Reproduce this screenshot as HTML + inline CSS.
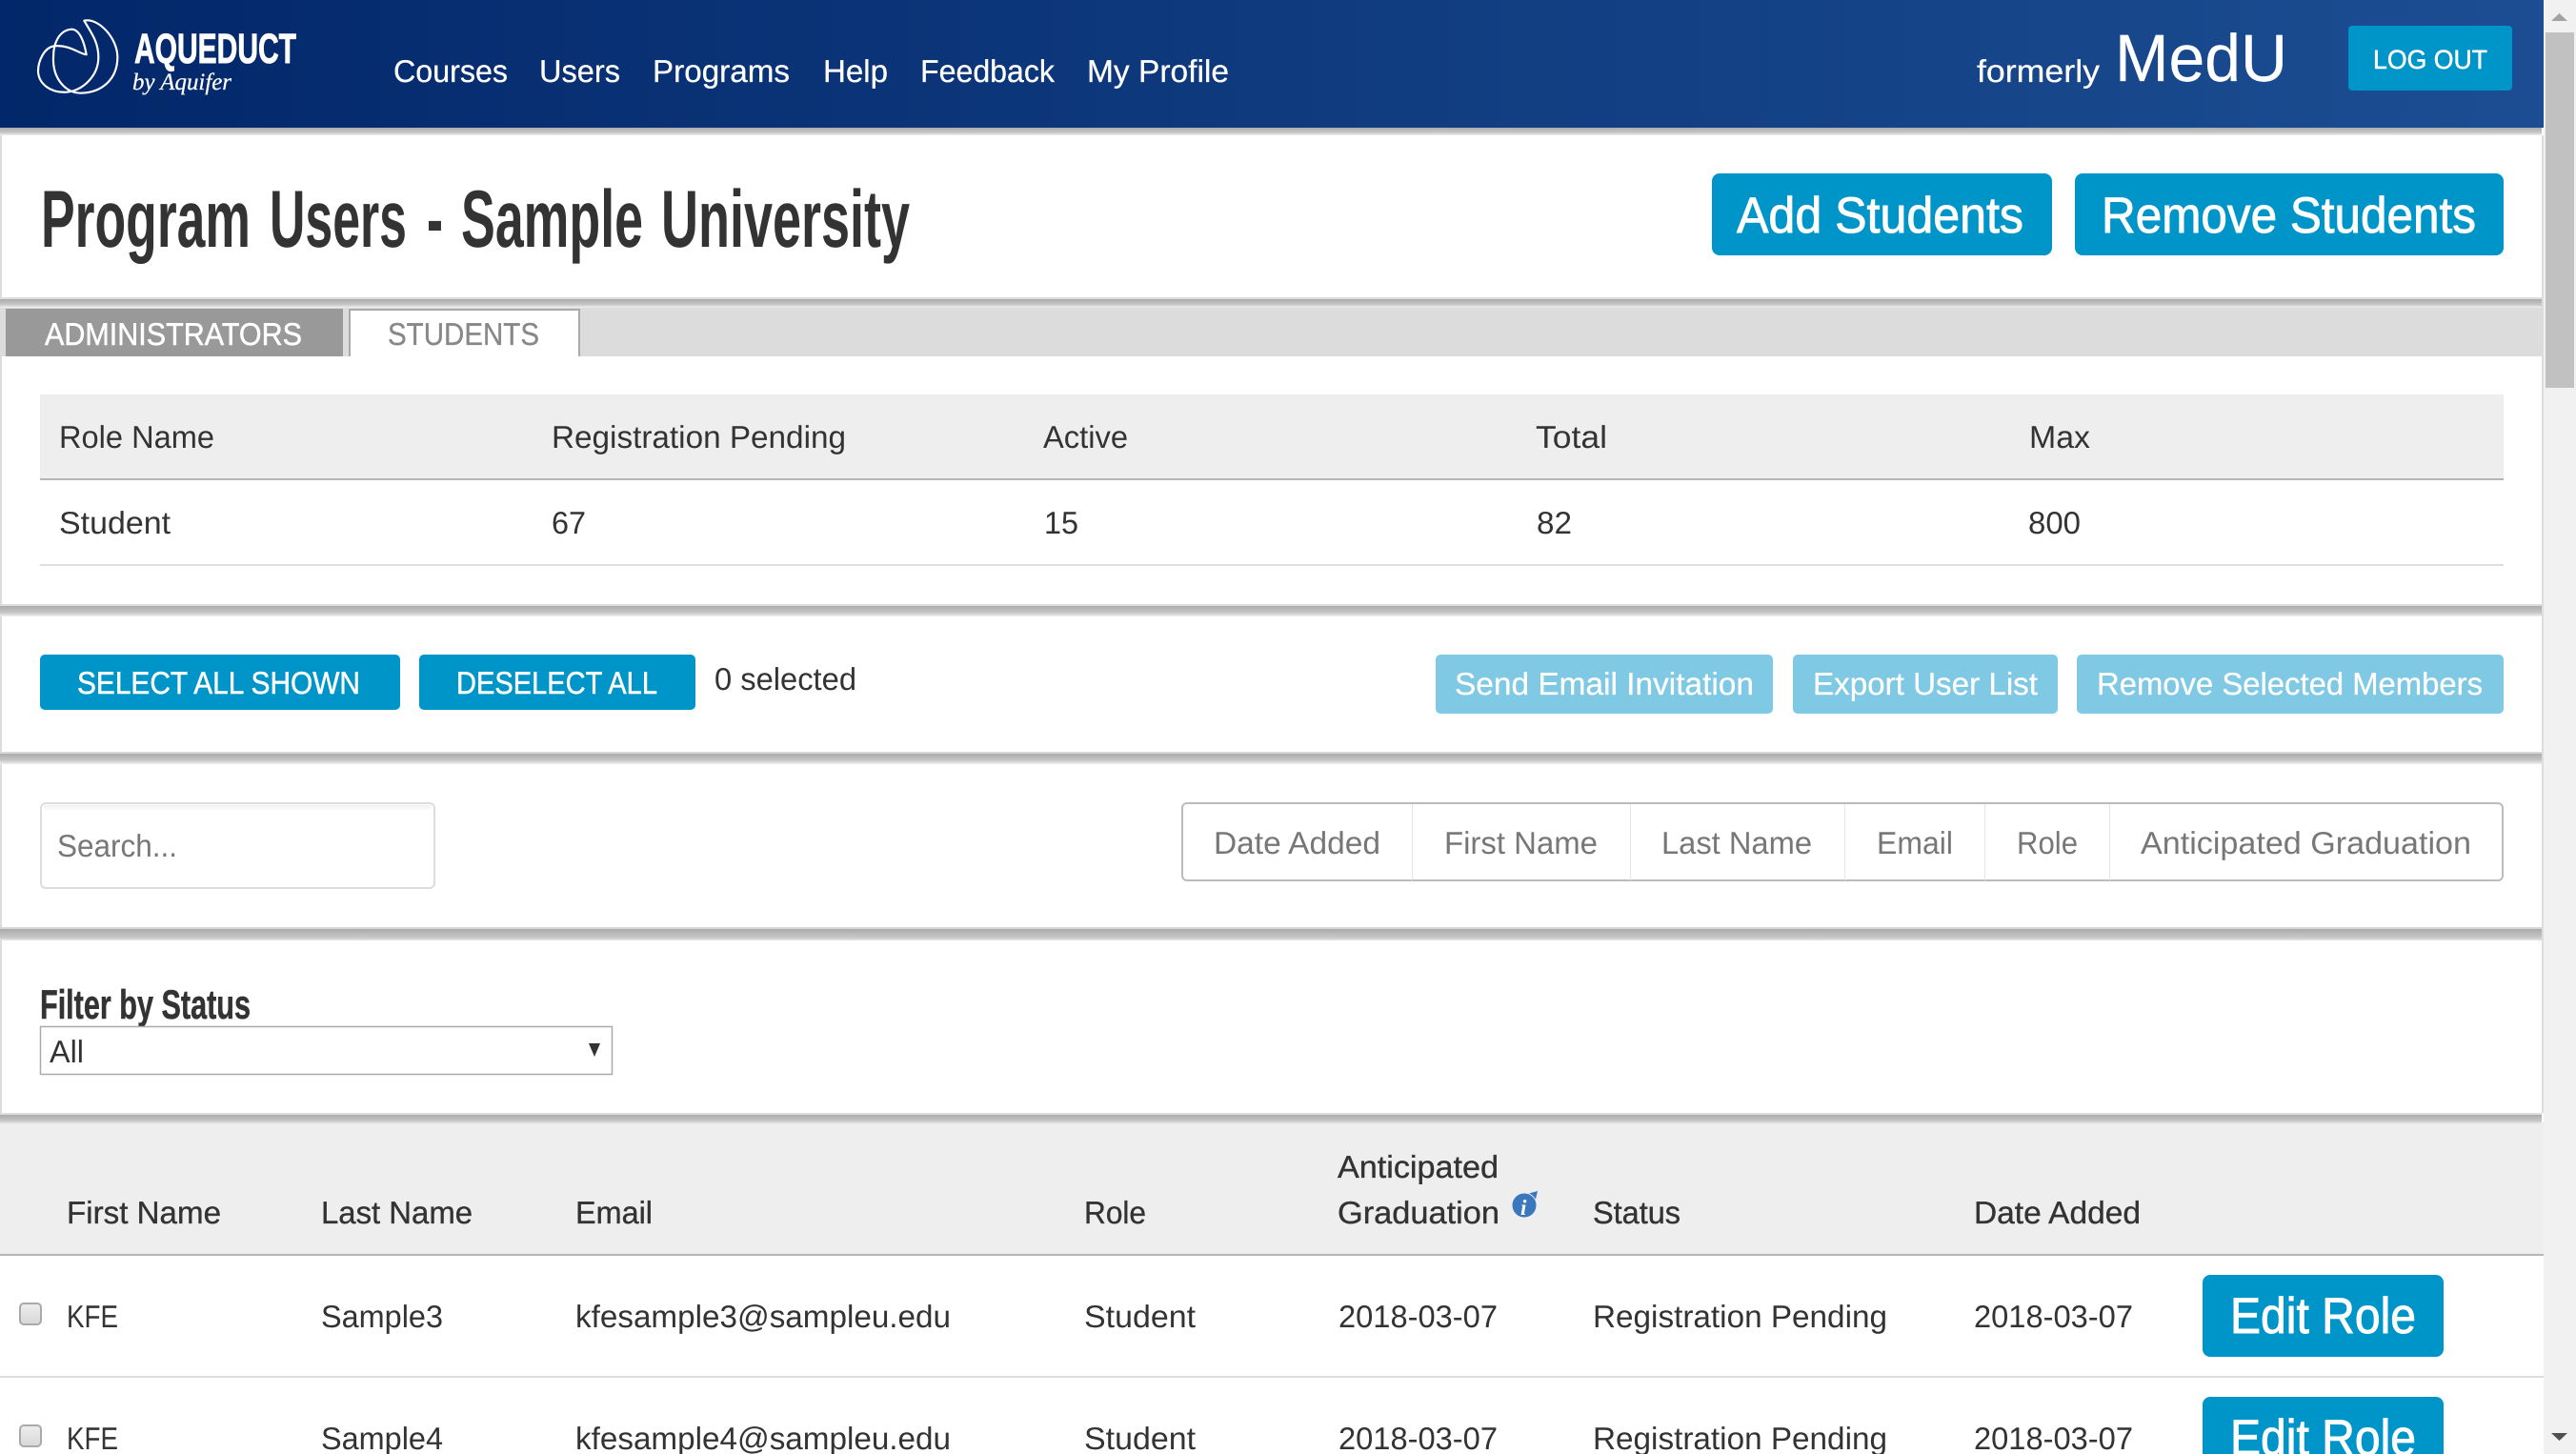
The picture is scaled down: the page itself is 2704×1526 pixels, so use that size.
<!DOCTYPE html>
<html lang="en"><head><meta charset="utf-8"><title>Program Users - Sample University</title>
<style>
html,body{margin:0;padding:0;width:2704px;height:1526px;overflow:hidden;background:#fff}
svg{display:block}
text{font-family:"Liberation Sans",sans-serif;font-size:33px;fill:#333;text-rendering:geometricPrecision;transform:translateX(-1px)}
.w{fill:#fff;stroke:#fff;stroke-width:.5px}
.b{stroke-width:.9px}
.l{stroke-width:.25px}
.g{fill:#777}
.osw{font-family:"Liberation Sans Narrow","Liberation Sans",sans-serif;font-weight:700}
.th{stroke:#333;stroke-width:.35px}
</style></head><body>
<svg xmlns="http://www.w3.org/2000/svg" width="2704" height="1526" viewBox="0 0 2704 1526">
<defs>
<linearGradient id="hd" x1="0" x2="1" y1="0" y2="0"><stop offset="0" stop-color="#02276a"/><stop offset="1" stop-color="#1c4d92"/></linearGradient>
<linearGradient id="sh" x1="0" x2="0" y1="0" y2="1"><stop offset="0" stop-color="#acacac"/><stop offset=".6" stop-color="#c4c4c4"/><stop offset="1" stop-color="#f0f0f0"/></linearGradient>
<linearGradient id="sh2" x1="0" x2="0" y1="0" y2="1"><stop offset="0" stop-color="#aaa"/><stop offset="1" stop-color="#ccc"/></linearGradient>
<linearGradient id="cb" x1="0" x2="0" y1="0" y2="1"><stop offset="0" stop-color="#eee"/><stop offset="1" stop-color="#d8d8d8"/></linearGradient>
<linearGradient id="ins" x1="0" x2="0" y1="0" y2="1"><stop offset="0" stop-color="#f0f0f0"/><stop offset="1" stop-color="#fff"/></linearGradient>
</defs>

<!-- page side borders -->
<rect x="0" y="142" width="2" height="1026" fill="#ddd"/>
<rect x="2668" y="142" width="2" height="1026" fill="#ddd"/>

<!-- header -->
<rect x="0" y="0" width="2670" height="134" fill="url(#hd)"/>
<rect x="0" y="134" width="2668" height="8" fill="url(#sh)"/>
<g transform="translate(20 0) scale(.3333)" fill="none" stroke="#fff" stroke-width="6.5" stroke-linejoin="round">
<path d="M205 65C250 55 310 120 310 180C310 250 260 292 195 293C150 295 105 250 108 180C108 130 130 95 165 92C190 92 205 130 212 172C190 170 160 140 110 145C80 150 60 190 60 225C62 265 100 293 150 290C200 285 250 240 250 180C250 130 225 100 205 65Z"/>
</g>
<text class="osw w b" x="142" y="66" style="font-size:44px" textLength="170" lengthAdjust="spacingAndGlyphs">AQUEDUCT</text>
<text class="w l" x="140" y="94" style="font-family:'Liberation Serif',serif;font-style:italic;font-size:25px" textLength="104" lengthAdjust="spacingAndGlyphs">by Aquifer</text>
<text class="w l" x="414" y="86" textLength="120" lengthAdjust="spacingAndGlyphs">Courses</text>
<text class="w l" x="567" y="86" textLength="85" lengthAdjust="spacingAndGlyphs">Users</text>
<text class="w l" x="686" y="86" textLength="144" lengthAdjust="spacingAndGlyphs">Programs</text>
<text class="w l" x="865" y="86" textLength="68" lengthAdjust="spacingAndGlyphs">Help</text>
<text class="w l" x="967" y="86" textLength="141" lengthAdjust="spacingAndGlyphs">Feedback</text>
<text class="w l" x="1142" y="86" textLength="149" lengthAdjust="spacingAndGlyphs">My Profile</text>
<text class="w l" x="2076" y="86" textLength="129" lengthAdjust="spacingAndGlyphs">formerly</text>
<text class="w l" x="2221" y="85" style="font-size:70px" textLength="181" lengthAdjust="spacingAndGlyphs">MedU</text>
<rect x="2465" y="27" width="172" height="68" rx="4" fill="#0095c8"/>
<text class="w" x="2492" y="72" style="font-size:28px" textLength="120" lengthAdjust="spacingAndGlyphs">LOG OUT</text>

<!-- title -->
<text class="osw" x="44" y="259" style="font-size:85px" textLength="220" lengthAdjust="spacingAndGlyphs">Program</text>
<text class="osw" x="284" y="259" style="font-size:85px" textLength="144" lengthAdjust="spacingAndGlyphs">Users</text>
<text class="osw" x="449" y="259" style="font-size:85px" textLength="17" lengthAdjust="spacingAndGlyphs">-</text>
<text class="osw" x="485" y="259" style="font-size:85px" textLength="191" lengthAdjust="spacingAndGlyphs">Sample</text>
<text class="osw" x="695" y="259" style="font-size:85px" textLength="261" lengthAdjust="spacingAndGlyphs">University</text>
<rect x="1797" y="182" width="357" height="86" rx="8" fill="#0095c8"/>
<text class="w b" x="1824" y="244" style="font-size:53px" textLength="301" lengthAdjust="spacingAndGlyphs">Add Students</text>
<rect x="2178" y="182" width="450" height="86" rx="8" fill="#0095c8"/>
<text class="w b" x="2207" y="244" style="font-size:53px" textLength="393" lengthAdjust="spacingAndGlyphs">Remove Students</text>

<!-- tabs -->
<rect x="0" y="312" width="2668" height="2" fill="#ddd"/>
<rect x="0" y="322" width="2670" height="52" fill="#dcdcdc"/>
<rect x="0" y="314" width="2668" height="9" fill="url(#sh)"/>
<rect x="6" y="324" width="354" height="50" fill="#999"/>
<rect x="367" y="325" width="241" height="50" fill="#fff" stroke="#aaa" stroke-width="2"/>
<rect x="360" y="374" width="260" height="4" fill="#fff"/>
<rect x="2" y="374" width="2666" height="30" fill="#fff"/>
<text class="w" x="48" y="362" textLength="270" lengthAdjust="spacingAndGlyphs">ADMINISTRATORS</text>
<text style="fill:#888;stroke:#888;stroke-width:.3px" x="408" y="362" textLength="159" lengthAdjust="spacingAndGlyphs">STUDENTS</text>

<!-- role table -->
<rect x="42" y="414" width="2586" height="88" fill="#eee"/>
<rect x="42" y="502" width="2586" height="2" fill="#b5b5b5"/>
<rect x="42" y="592" width="2586" height="2" fill="#ddd"/>
<text x="63" y="470" textLength="163" lengthAdjust="spacingAndGlyphs">Role Name</text>
<text x="580" y="470" textLength="309" lengthAdjust="spacingAndGlyphs">Registration Pending</text>
<text x="1096" y="470" textLength="89" lengthAdjust="spacingAndGlyphs">Active</text>
<text x="1613" y="470" textLength="75" lengthAdjust="spacingAndGlyphs">Total</text>
<text x="2131" y="470" textLength="64" lengthAdjust="spacingAndGlyphs">Max</text>
<text x="63" y="560" textLength="117" lengthAdjust="spacingAndGlyphs">Student</text>
<text x="580" y="560" textLength="36" lengthAdjust="spacingAndGlyphs">67</text>
<text x="1097" y="560" textLength="36" lengthAdjust="spacingAndGlyphs">15</text>
<text x="1614" y="560" textLength="37" lengthAdjust="spacingAndGlyphs">82</text>
<text x="2130" y="560" textLength="55" lengthAdjust="spacingAndGlyphs">800</text>

<rect x="0" y="634" width="2668" height="2" fill="#ddd"/>
<rect x="0" y="636" width="2668" height="11" fill="url(#sh)"/>

<!-- actions -->
<rect x="42" y="687" width="378" height="58" rx="5" fill="#0095c8"/>
<text class="w" x="82" y="728" textLength="297" lengthAdjust="spacingAndGlyphs">SELECT ALL SHOWN</text>
<rect x="440" y="687" width="290" height="58" rx="5" fill="#0095c8"/>
<text class="w" x="480" y="728" textLength="211" lengthAdjust="spacingAndGlyphs">DESELECT ALL</text>
<text x="751" y="724" textLength="149" lengthAdjust="spacingAndGlyphs">0 selected</text>
<rect x="1507" y="687" width="354" height="62" rx="5" fill="#80c9e4"/>
<text class="w l" x="1528" y="729" textLength="314" lengthAdjust="spacingAndGlyphs">Send Email Invitation</text>
<rect x="1882" y="687" width="278" height="62" rx="5" fill="#80c9e4"/>
<text class="w l" x="1904" y="729" textLength="236" lengthAdjust="spacingAndGlyphs">Export User List</text>
<rect x="2180" y="687" width="448" height="62" rx="5" fill="#80c9e4"/>
<text class="w l" x="2202" y="729" textLength="405" lengthAdjust="spacingAndGlyphs">Remove Selected Members</text>

<rect x="0" y="789" width="2668" height="2" fill="#d8d8d8"/>
<rect x="0" y="791" width="2668" height="11" fill="url(#sh)"/>

<!-- search and sort -->
<rect x="43" y="843" width="413" height="89" rx="5" fill="#fff" stroke="#ddd" stroke-width="2"/>
<rect x="46" y="845" width="407" height="6" fill="url(#ins)"/>
<text class="g" x="61" y="899" textLength="126" lengthAdjust="spacingAndGlyphs">Search...</text>
<rect x="1241" y="843" width="1386" height="81" rx="5" fill="#fff" stroke="#bbb" stroke-width="2"/>
<rect x="1482" y="844" width="1" height="80" fill="#e6e6e6"/>
<rect x="1711" y="844" width="1" height="80" fill="#e6e6e6"/>
<rect x="1936" y="844" width="1" height="80" fill="#e6e6e6"/>
<rect x="2083" y="844" width="1" height="80" fill="#e6e6e6"/>
<rect x="2214" y="844" width="1" height="80" fill="#e6e6e6"/>
<text class="g" x="1275" y="896" textLength="175" lengthAdjust="spacingAndGlyphs">Date Added</text>
<text class="g" x="1517" y="896" textLength="161" lengthAdjust="spacingAndGlyphs">First Name</text>
<text class="g" x="1745" y="896" textLength="158" lengthAdjust="spacingAndGlyphs">Last Name</text>
<text class="g" x="1971" y="896" textLength="80" lengthAdjust="spacingAndGlyphs">Email</text>
<text class="g" x="2118" y="896" textLength="64" lengthAdjust="spacingAndGlyphs">Role</text>
<text class="g" x="2248" y="896" textLength="347" lengthAdjust="spacingAndGlyphs">Anticipated Graduation</text>

<rect x="0" y="973" width="2668" height="2" fill="#d8d8d8"/>
<rect x="0" y="975" width="2668" height="10" fill="url(#sh2)"/>
<rect x="0" y="985" width="2668" height="2" fill="#ddd"/>

<!-- filter -->
<text class="osw" x="43" y="1069" style="font-size:43px;stroke:#333;stroke-width:.5px" textLength="221" lengthAdjust="spacingAndGlyphs">Filter by Status</text>
<rect x="42.5" y="1077.5" width="600" height="50" fill="#fff" stroke="#aaa" stroke-width="1.5"/>
<text x="53" y="1115" textLength="36" lengthAdjust="spacingAndGlyphs">All</text>
<path d="M618 1095H630L624 1109Z" fill="#333"/>

<rect x="0" y="1168" width="2668" height="2" fill="#ddd"/>

<!-- users table -->
<rect x="0" y="1178" width="2670" height="138" fill="#eee"/>
<rect x="0" y="1170" width="2668" height="10" fill="url(#sh)"/>
<rect x="0" y="1316" width="2670" height="2" fill="#b5b5b5"/>
<text class="th" x="71" y="1284" textLength="162" lengthAdjust="spacingAndGlyphs">First Name</text>
<text class="th" x="338" y="1284" textLength="159" lengthAdjust="spacingAndGlyphs">Last Name</text>
<text class="th" x="605" y="1284" textLength="81" lengthAdjust="spacingAndGlyphs">Email</text>
<text class="th" x="1139" y="1284" textLength="65" lengthAdjust="spacingAndGlyphs">Role</text>
<text class="th" x="1405" y="1236" textLength="169" lengthAdjust="spacingAndGlyphs">Anticipated</text>
<text class="th" x="1405" y="1284" textLength="170" lengthAdjust="spacingAndGlyphs">Graduation</text>
<path d="M1603 1253L1614 1250L1611 1263Z" fill="#3a78bd"/>
<circle cx="1600" cy="1265" r="13" fill="#3a78bd" stroke="#eee" stroke-width="1"/>
<text x="1597" y="1275" style="font-family:'Liberation Serif',serif;font-style:italic;font-weight:700;font-size:23px;fill:#fff">i</text>
<text class="th" x="1673" y="1284" textLength="92" lengthAdjust="spacingAndGlyphs">Status</text>
<text class="th" x="2073" y="1284" textLength="175" lengthAdjust="spacingAndGlyphs">Date Added</text>

<!-- row 1 -->
<rect x="21" y="1368" width="22" height="22" rx="4" fill="url(#cb)" stroke="#aaa" stroke-width="2"/>
<text x="71" y="1393" textLength="54" lengthAdjust="spacingAndGlyphs">KFE</text>
<text x="338" y="1393" textLength="128" lengthAdjust="spacingAndGlyphs">Sample3</text>
<text x="605" y="1393" textLength="394" lengthAdjust="spacingAndGlyphs">kfesample3@sampleu.edu</text>
<text x="1139" y="1393" textLength="117" lengthAdjust="spacingAndGlyphs">Student</text>
<text x="1406" y="1393" textLength="167" lengthAdjust="spacingAndGlyphs">2018-03-07</text>
<text x="1673" y="1393" textLength="309" lengthAdjust="spacingAndGlyphs">Registration Pending</text>
<text x="2073" y="1393" textLength="167" lengthAdjust="spacingAndGlyphs">2018-03-07</text>
<rect x="2312" y="1338" width="253" height="86" rx="8" fill="#0095c8"/>
<text class="w b" x="2342" y="1399" style="font-size:53px" textLength="195" lengthAdjust="spacingAndGlyphs">Edit Role</text>
<rect x="0" y="1444" width="2670" height="2" fill="#ddd"/>

<!-- row 2 -->
<rect x="21" y="1496" width="22" height="22" rx="4" fill="url(#cb)" stroke="#aaa" stroke-width="2"/>
<text x="71" y="1521" textLength="54" lengthAdjust="spacingAndGlyphs">KFE</text>
<text x="338" y="1521" textLength="128" lengthAdjust="spacingAndGlyphs">Sample4</text>
<text x="605" y="1521" textLength="394" lengthAdjust="spacingAndGlyphs">kfesample4@sampleu.edu</text>
<text x="1139" y="1521" textLength="117" lengthAdjust="spacingAndGlyphs">Student</text>
<text x="1406" y="1521" textLength="167" lengthAdjust="spacingAndGlyphs">2018-03-07</text>
<text x="1673" y="1521" textLength="309" lengthAdjust="spacingAndGlyphs">Registration Pending</text>
<text x="2073" y="1521" textLength="167" lengthAdjust="spacingAndGlyphs">2018-03-07</text>
<rect x="2312" y="1466" width="253" height="86" rx="8" fill="#0095c8"/>
<text class="w b" x="2342" y="1527" style="font-size:53px" textLength="195" lengthAdjust="spacingAndGlyphs">Edit Role</text>

<!-- scrollbar -->
<rect x="2670" y="0" width="34" height="1526" fill="#f1f1f1"/>
<rect x="2672" y="34" width="30" height="373" fill="#c1c1c1"/>
<path d="M2686.5 14L2695 22H2678Z" fill="#a3a3a3"/>
<path d="M2678 1504H2695L2686.5 1512Z" fill="#505050"/>
</svg>
</body></html>
